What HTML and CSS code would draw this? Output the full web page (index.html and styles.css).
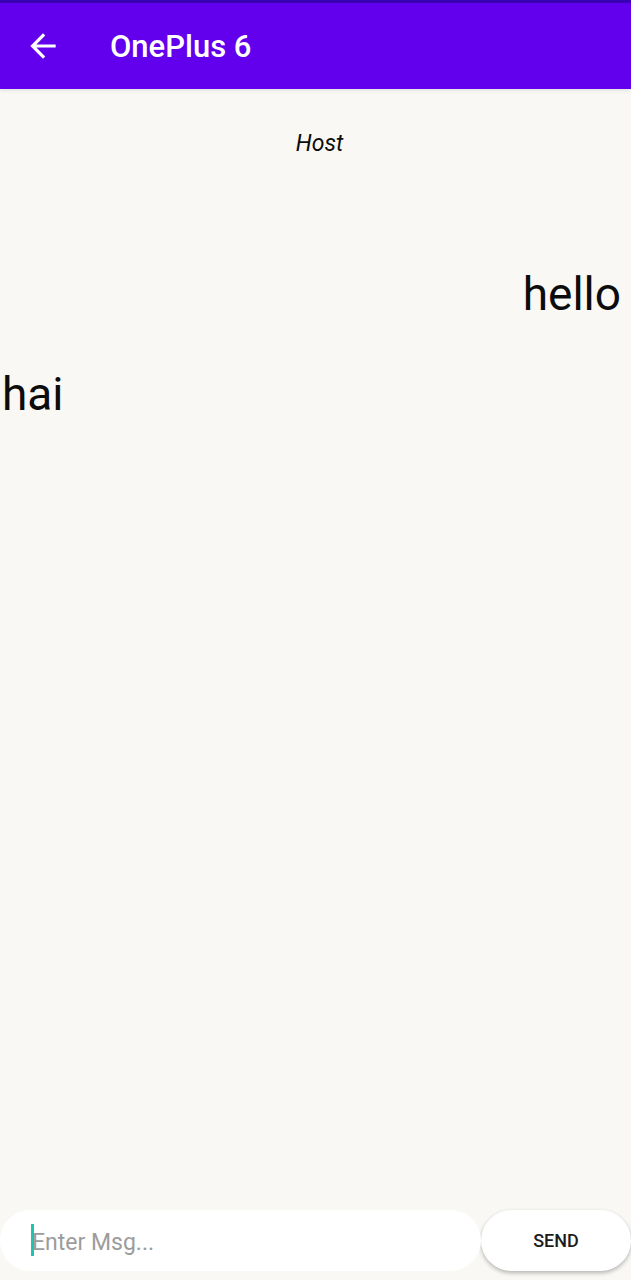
FILE: index.html
```html
<!DOCTYPE html>
<html lang="en">
<head>
<meta charset="utf-8">
<meta name="viewport" content="width=device-width, initial-scale=1">
<title>OnePlus 6</title>
<link rel="stylesheet" href="styles.css">
</head>
<body>
<div class="screen">
  <header class="app-bar">
    <button class="back" type="button" aria-label="Back">
      <svg class="back-icon" viewBox="0 0 24 24" aria-hidden="true"><path fill="currentColor" d="M20 11H7.83l5.59-5.59L12 4l-8 8 8 8 1.410-1.410L7.830 13H20v-2z"/></svg>
    </button>
    <h1 class="title">OnePlus 6</h1>
  </header>
  <p class="role">Host</p>
  <main class="messages">
    <p class="message sent">hello</p>
    <p class="message received">hai</p>
  </main>
  <form class="composer">
    <div class="field">
      <input class="entry" type="text" placeholder="Enter Msg..." aria-label="Message">
      <span class="caret"></span>
    </div>
    <button class="send" type="button">SEND</button>
  </form>
</div>
</body>
</html>
```
FILE: styles.css
```css
* {
  box-sizing: border-box;
}

body {
  margin: 0;
  background: #f9f8f4;
  color: #0c0c0c;
  font-family: Roboto, "Liberation Sans", sans-serif;
}

.screen {
  display: flex;
  flex-direction: column;
  min-height: 100vh;
}

.app-bar {
  display: flex;
  align-items: flex-start;
  gap: 48px;
  padding: 24px 24px 22px;
  border-top: 3px solid #3a00b3;
  background: #6200ee;
  color: #fff;
  box-shadow: 0 1px 4px rgba(0, 0, 0, 0.12);
}

.back {
  display: flex;
  padding: 0;
  border: 0;
  background: none;
  color: inherit;
}

.back-icon {
  width: 38px;
  height: 38px;
}

.title {
  margin: 0;
  font-size: 31px;
  line-height: 40px;
  font-weight: 500;
}

.role {
  margin: 0;
  padding: 41px 0 40px 8px;
  font-size: 23px;
  line-height: 28px;
  font-style: italic;
  text-align: center;
}

.messages {
  display: flex;
  flex: 1;
  flex-direction: column;
  gap: 44px;
  padding: 68px 10px 0 2px;
}

.message {
  margin: 0;
  font-size: 46px;
  line-height: 56px;
}

.sent {
  align-self: flex-end;
}

.received {
  align-self: flex-start;
}

.composer {
  display: flex;
  padding-bottom: 9px;
}

.field {
  position: relative;
  flex: 1;
}

.entry {
  width: 100%;
  height: 61px;
  padding: 3px 32px 0;
  border: 0;
  border-radius: 31px;
  outline: 0;
  background: #fff;
  color: inherit;
  font: 23px/28px Roboto, "Liberation Sans", sans-serif;
}

.entry::placeholder {
  color: #9c9c9c;
  opacity: 1;
}

.caret {
  position: absolute;
  top: 14px;
  left: 31px;
  width: 3px;
  height: 32px;
  background: #1fc4b0;
}

.send {
  width: 150px;
  height: 61px;
  padding: 0;
  border: 0;
  border-radius: 31px;
  background: #fff;
  box-shadow: 0 2px 4px rgba(0, 0, 0, 0.28);
  color: #1c1c1c;
  font: 500 18px/24px Roboto, "Liberation Sans", sans-serif;
}
```
